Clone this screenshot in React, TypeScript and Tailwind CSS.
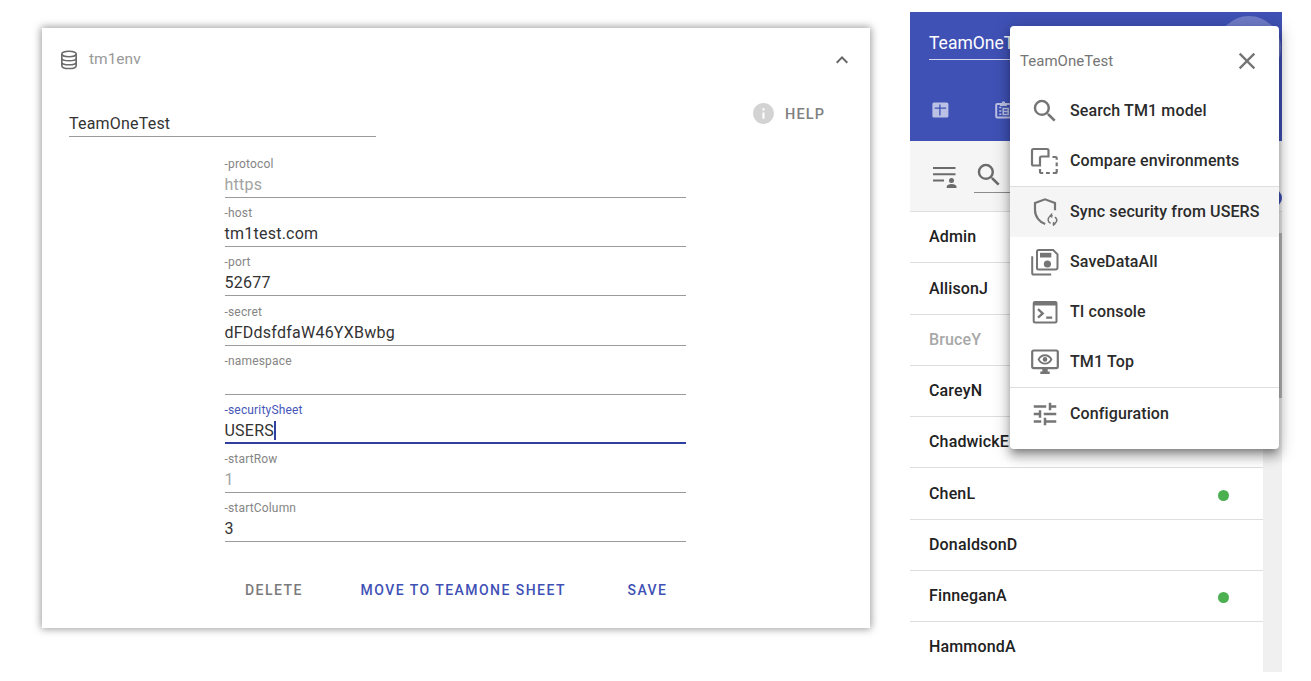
import type { ReactNode } from "react";
import { MdClose, MdInfo, MdKeyboardArrowUp, MdSearch, MdTune } from "react-icons/md";

type Field = { label: string; value: string; state?: "placeholder" | "focus" };

const fields: Field[] = [
  { label: "-protocol", value: "https", state: "placeholder" },
  { label: "-host", value: "tm1test.com" },
  { label: "-port", value: "52677" },
  { label: "-secret", value: "dFDdsfdfaW46YXBwbg" },
  { label: "-namespace", value: "" },
  { label: "-securitySheet", value: "USERS", state: "focus" },
  { label: "-startRow", value: "1", state: "placeholder" },
  { label: "-startColumn", value: "3" },
];

const users = [
  { name: "Admin" },
  { name: "AllisonJ" },
  { name: "BruceY", muted: true },
  { name: "CareyN" },
  { name: "ChadwickE" },
  { name: "ChenL", online: true },
  { name: "DonaldsonD" },
  { name: "FinneganA", online: true },
  { name: "HammondA" },
];

function DatabaseIcon() {
  return (
    <svg width="18" height="20" viewBox="0 0 18 20" fill="none" stroke="#6b6b6b" strokeWidth="1.6">
      <ellipse cx="9" cy="4" rx="7.2" ry="2.8" />
      <path d="M1.8 4v11.400c0 1.800 3.200 3.100 7.200 3.100s7.200-1.300 7.200-3.100v-11.400M1.800 8c0 1.700 3.200 2.800 7.200 2.800s7.200-1.100 7.200-2.800M1.800 11.900c0 1.700 3.200 2.800 7.200 2.800s7.200-1.100 7.200-2.800" />
    </svg>
  );
}

function CompareIcon() {
  return (
    <svg width="30" height="30" viewBox="0 0 30 30" fill="none" stroke="#757575" strokeWidth="2.2">
      <path d="M3.500 3h13.500a1.500 1.500 0 0 1 1.500 1.500v6H11.500a1.500 1.500 0 0 0-1.500 1.500V19.500H3.500A1.500 1.500 0 0 1 2 18V4.500A1.500 1.500 0 0 1 3.500 3z" />
      <path d="M22.500 11h3a1.200 1.200 0 0 1 1.200 1.200V13.800M26.700 16.500v3.800M26.700 23v2.800a1.200 1.200 0 0 1-1.200 1.200H22.800M19.800 27H16M13.200 27H11.200A1.200 1.200 0 0 1 10 25.800V23" />
    </svg>
  );
}

function ShieldSyncIcon() {
  return (
    <svg width="30" height="30" viewBox="0 0 30 30" fill="none" stroke="#757575" className="-mt-[3px]">
      <path strokeWidth="2.200" d="M15.200 28C9.600 26.200 5 20.800 5 14V7L15 3.300 25 7v7.200" />
      <path strokeWidth="1.500" d="M20.600 27.300a3.900 3.900 0 0 1-1.600-6.100M24.900 21.100a3.900 3.900 0 0 1 1.200 5.200" />
      <path strokeWidth="1.500" d="M19 21.200c1-1.200 2.200-1.600 3.600-1.500M26.100 26.300c-.9 1.200-1.900 1.700-3.400 1.700" />
      <path fill="#757575" stroke="none" d="M22.200 16.800v5.400l-2.800-2.600zM22.900 25.400v5.200l2.900-2.600z" />
    </svg>
  );
}

function SaveAllIcon() {
  return (
    <svg width="30" height="30" viewBox="0 0 30 30" fill="none" stroke="#757575" strokeWidth="2" className="-mt-px">
      <path d="M8.500 3h14.700L27.500 7.300V20.500a2 2 0 0 1-2 2h-17a1.500 1.500 0 0 1-1.500-1.500V4.500A1.500 1.500 0 0 1 8.500 3z" />
      <path d="M2.200 9.300V26a1.600 1.600 0 0 0 1.600 1.600H21.200" />
      <path fill="#757575" stroke="none" d="M10 5.800h11.300v4.700H10z" />
      <circle cx="17.400" cy="17" r="3.600" fill="#757575" stroke="none" />
    </svg>
  );
}

function ConsoleIcon() {
  return (
    <svg width="30" height="30" viewBox="0 0 30 30" fill="none" stroke="#757575" strokeWidth="2" className="-mt-px">
      <rect x="3.700" y="5" width="22.800" height="20.600" rx="1.500" />
      <path fill="#757575" stroke="none" d="M3.500 4.500h23v4h-23z" />
      <path strokeWidth="2.300" d="M8 12.200l4.700 4.200L8 20.600M16.200 20.600h6" />
    </svg>
  );
}

function MonitorEyeIcon() {
  return (
    <svg width="30" height="30" viewBox="0 0 30 30" fill="none" stroke="#757575" strokeWidth="2.2" className="-mt-[3px]">
      <rect x="2.200" y="4.500" width="25.600" height="17.600" rx="1.500" />
      <path fill="#757575" stroke="none" d="M12.300 22.500h5.400v3h2V28h-9.400v-2.500h2z" />
      <path strokeWidth="1.900" d="M8.600 13.400c1.300-2.700 3.600-4.200 6.400-4.200s5.100 1.500 6.400 4.200c-1.300 2.700-3.600 4.200-6.400 4.200S9.900 16.100 8.600 13.400z" />
      <circle cx="15" cy="13.400" r="2.300" fill="#757575" stroke="none" />
    </svg>
  );
}

function ListPersonIcon() {
  return (
    <svg width="26" height="24" viewBox="0 0 26 24" fill="#6b6b6b">
      <path d="M1 2h22.500v2H1zM1 8.300h22.500v2H1zM1 14.600h11v2H1z" />
      <circle cx="19.500" cy="15.400" r="2.500" />
      <path d="M14.700 23v-1.300c0-1.800 2.400-2.800 4.900-2.800s4.900 1 4.900 2.800V23z" />
    </svg>
  );
}

function TableIcon() {
  return (
    <svg width="17" height="16" viewBox="0 0 17 16">
      <rect x="0.400" y="0.400" width="16" height="15.200" rx="1.500" fill="#bbc1e5" />
      <path d="M7.900 2.500v11M2.700 6.200h11.500" stroke="#3f51b5" strokeWidth="1.300" />
    </svg>
  );
}

function ClipboardIcon() {
  return (
    <svg width="17" height="18" viewBox="0 0 17 18" fill="none" stroke="#bbc1e5" strokeWidth="2">
      <rect x="1.200" y="2.900" width="14.600" height="13.600" rx="1" />
      <path fill="#bbc1e5" stroke="none" d="M5 2h1.800a1.700 1.700 0 0 1 3.400 0H12v3H5z" />
      <path strokeWidth="1.500" d="M4.200 6.500h2.200M4.200 10h2.200M4.200 13.300h2.200M8.200 7.500h5v6h-5zM8 10.500h5" />
    </svg>
  );
}

function FieldRow({ label, value, state }: Field) {
  const focus = state === "focus";
  return (
    <div
      className={`flex h-[49.13px] flex-col justify-end ${
        focus ? "border-b-2 border-[#303f9f]" : "border-b border-[#9b9b9b]"
      }`}
    >
      <span className={`text-[12px] leading-[14px] tracking-[0.17px] ${focus ? "text-[#4656b8]" : "text-[#858585]"}`}>
        {label}
      </span>
      <div
        className={`flex items-center text-[16px] leading-5 tracking-[0.24px] ${
          focus ? "h-[25px] pt-[3px]" : "h-[26px] pt-[2px]"
        } ${state === "placeholder" ? "text-[#a3a3a3]" : "text-[#333]"}`}
      >
        {value}
        {focus && <span className="h-[19px] w-[1.5px] bg-[#303f9f]" />}
      </div>
    </div>
  );
}

function MenuItem({ icon, label, active }: { icon: ReactNode; label: string; active?: boolean }) {
  return (
    <div className={`flex h-[50px] shrink-0 items-center gap-[10px] pl-5 ${active ? "bg-[#f5f5f5]" : ""}`}>
      <span className="flex w-[30px] justify-center text-[#757575]">{icon}</span>
      <span className="whitespace-nowrap text-[16px] font-medium tracking-[0.12px] text-[#2b2b2b]">{label}</span>
    </div>
  );
}

function EnvironmentCard() {
  return (
    <section className="mt-7 flex h-[600px] w-[828px] flex-col bg-white shadow-[0_0_8px_1px_rgba(0,0,0,0.4)]">
      <header className="flex h-16 items-center pl-[18px] pr-4">
        <DatabaseIcon />
        <span className="-mt-[2px] ml-[11px] flex-1 text-[15.5px] leading-5 text-[#999]">tm1env</span>
        <MdKeyboardArrowUp className="size-6 text-[#666]" />
      </header>
      <div className="flex h-[57px] justify-between pl-[27px] pr-[45px]">
        <div className="mt-[18px] h-[27px] w-[307px] border-b border-[#9b9b9b] text-[16px] leading-[27px] tracking-[0.2px] text-[#333]">
          TeamOneTest
        </div>
        <div className="mt-[9px] flex h-6 items-center gap-[9px]">
          <MdInfo className="size-[25px] text-[#d3d3d3]" />
          <span className="pt-[3px] text-[14.5px] font-medium leading-5 tracking-[1.1px] text-[#808080]">HELP</span>
        </div>
      </div>
      <div className="ml-[182.500px] flex w-[461px] flex-col">
        {fields.map((f) => (
          <FieldRow key={f.label} {...f} />
        ))}
      </div>
      <footer className="mt-[38px] flex pl-[203px] text-[14px] font-medium leading-5 tracking-[1.46px] text-[#3f51b5]">
        <span className="w-[115.500px] text-[#7b7b7b]">DELETE</span>
        <span className="w-[267px]">MOVE TO TEAMONE SHEET</span>
        <span>SAVE</span>
      </footer>
    </section>
  );
}

function UserPanel() {
  return (
    <section className="relative mt-3 flex h-[660px] w-[372px] flex-col">
      <div className="relative flex h-[129px] shrink-0 flex-col overflow-hidden bg-[#3f51b5] pl-[19px]">
        <div className="mt-[17px] h-[31px] w-[240px] border-b border-[#d5d9ef] text-[17.5px] leading-[28px] text-white">
          TeamOneTest
        </div>
        <div className="mt-[41px] flex items-center gap-[46px] pl-[3px]">
          <TableIcon />
          <ClipboardIcon />
        </div>
        <div className="absolute left-[307px] top-1 size-16 rounded-full bg-[#6f7cc8]" />
      </div>
      <div className="relative flex h-[71px] shrink-0 overflow-hidden border-b border-[#dedede] bg-[#f5f5f5] pl-[22px]">
        <div className="mt-6">
          <ListPersonIcon />
        </div>
        <div className="ml-4 h-[52px] w-[240px] border-b border-[#8b8b8b] pt-[19px]">
          <MdSearch className="size-[30px] text-[#6b6b6b]" />
        </div>
        <div className="absolute left-[354px] top-[48px] size-[18px] rounded-full bg-[#3f51b5]" />
      </div>
      <div className="flex min-h-0 flex-1">
        <ul className="flex-1 overflow-hidden">
          {users.map((u) => (
            <li
              key={u.name}
              className="flex h-[51.26px] items-center justify-between border-b border-[#dedede] pl-[19px] pr-[34px] last:border-b-0 last:pb-[2px]"
            >
              <span
                className={`pt-[0.5px] text-[16px] font-medium leading-5 tracking-[0.15px] ${u.muted ? "text-[#a8a8a8]" : "text-[#212121]"}`}
              >
                {u.name}
              </span>
              {u.online && <span className="mt-1 size-[11px] rounded-full bg-[#4caf50]" />}
            </li>
          ))}
        </ul>
        <div className="w-[19px] bg-[#f0f0f0] pt-[21px]">
          <div className="h-[165px] bg-[#b8b8b8]" />
        </div>
      </div>
      <ModelMenu />
    </section>
  );
}

function ModelMenu() {
  return (
    <nav className="absolute left-[100px] top-[14px] flex h-[423px] w-[269px] flex-col rounded-[4px] bg-white shadow-[0_5px_6px_-3px_rgba(0,0,0,0.3),0_8px_10px_1px_rgba(0,0,0,0.18),0_3px_16px_3px_rgba(0,0,0,0.18)]">
      <div className="flex h-[60px] shrink-0 items-center justify-between pl-[10px] pr-[18px] pt-[10px]">
        <span className="text-[15px] tracking-[0.03px] text-[#757575]">TeamOneTest</span>
        <MdClose className="size-7 text-[#757575]" />
      </div>
      <MenuItem icon={<MdSearch className="size-[30px]" />} label="Search TM1 model" />
      <MenuItem icon={<CompareIcon />} label="Compare environments" />
      <div className="border-t border-[#dedede]" />
      <MenuItem icon={<ShieldSyncIcon />} label="Sync security from USERS" active />
      <MenuItem icon={<SaveAllIcon />} label="SaveDataAll" />
      <MenuItem icon={<ConsoleIcon />} label="TI console" />
      <MenuItem icon={<MonitorEyeIcon />} label="TM1 Top" />
      <div className="mb-px border-t border-[#dedede]" />
      <MenuItem icon={<MdTune className="size-[30px]" />} label="Configuration" />
    </nav>
  );
}

export default function App() {
  return (
    <main className="flex h-[681px] w-[1311px] items-start gap-10 overflow-hidden bg-white pl-[42px] font-['Roboto',sans-serif]">
      <EnvironmentCard />
      <UserPanel />
    </main>
  );
}
